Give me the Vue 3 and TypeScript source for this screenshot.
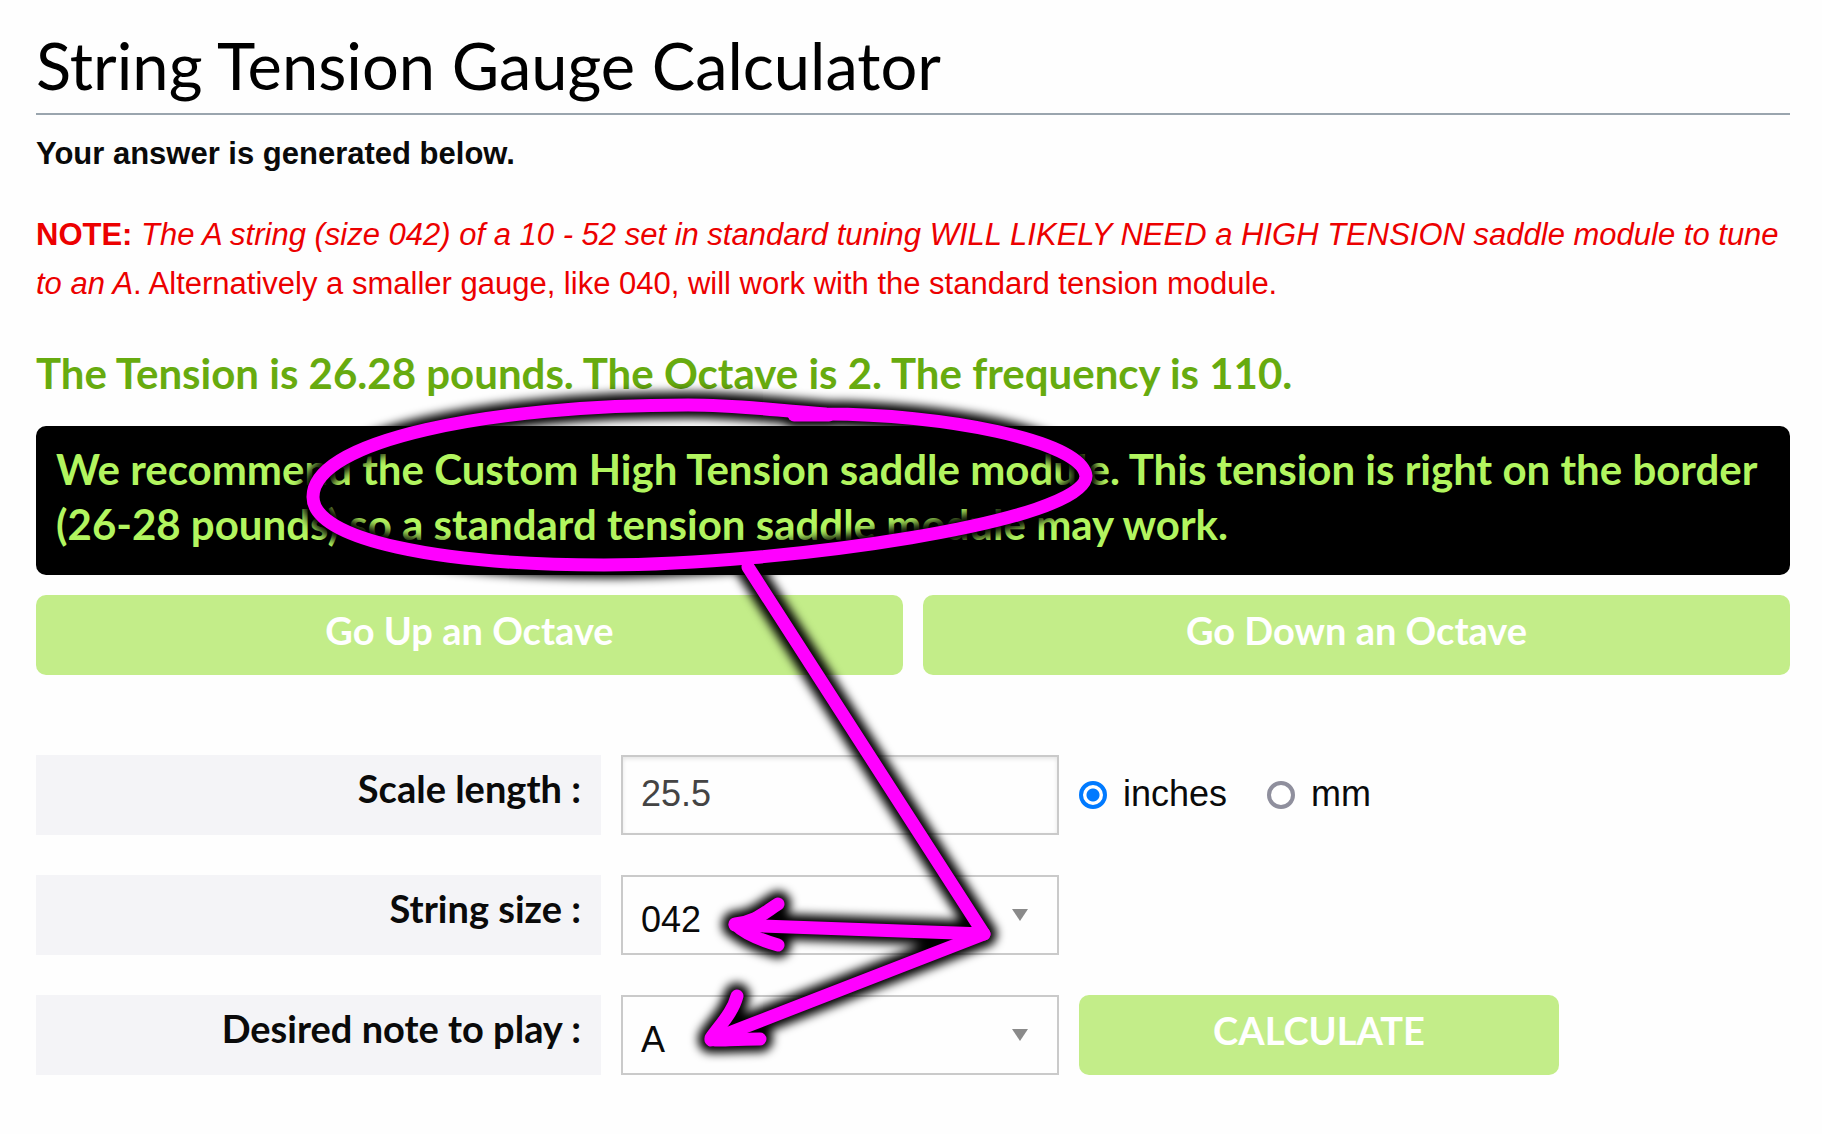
<script setup lang="ts">
import { ref } from 'vue'

type Unit = 'inches' | 'mm'

const scaleLength = ref('25.5')
const unit = ref<Unit>('inches')
const stringSize = ref('042')
const note = ref('A')

const units: Unit[] = ['inches', 'mm']
const sizes: string[] = ['038', '040', '042', '044', '046', '052']
const notes: string[] = ['A', 'B', 'C', 'D', 'E', 'F', 'G']
</script>

<template>
  <main class="page">
    <h1 class="title">String Tension Gauge Calculator</h1>
    <p class="lead">Your answer is generated below.</p>
    <p class="note">
      <strong>NOTE:</strong> <em>The A string (size 042) of a 10 - 52 set in standard tuning WILL LIKELY NEED a HIGH TENSION saddle module to tune to an A</em>. Alternatively a smaller gauge, like 040, will work with the standard tension module.
    </p>

    <h2 class="result">The Tension is 26.28 pounds. The Octave is 2. The frequency is 110.</h2>
    <p class="advice">We recommend the Custom High Tension saddle module. This tension is right on the border (26-28 pounds) so a standard tension saddle module may work.</p>

    <div class="octaves">
      <button type="button" class="btn">Go Up an Octave</button>
      <button type="button" class="btn">Go Down an Octave</button>
    </div>

    <form class="form" @submit.prevent>
      <div class="row">
        <label class="label" for="scale">Scale length :</label>
        <input id="scale" v-model="scaleLength" class="field text" type="text" />
        <div class="units">
          <label v-for="u in units" :key="u" class="unit">
            <input v-model="unit" class="radio" type="radio" name="unit" :value="u" />
            <span>{{ u }}</span>
          </label>
        </div>
      </div>
      <div class="row">
        <label class="label" for="size">String size :</label>
        <div class="picker">
          <select id="size" v-model="stringSize" class="field select">
            <option v-for="s in sizes" :key="s">{{ s }}</option>
          </select>
          <svg class="caret" viewBox="0 0 16 12" aria-hidden="true"><path d="M0 0H16L8 12Z" /></svg>
        </div>
      </div>
      <div class="row">
        <label class="label" for="note">Desired note to play :</label>
        <div class="picker">
          <select id="note" v-model="note" class="field select">
            <option v-for="n in notes" :key="n">{{ n }}</option>
          </select>
          <svg class="caret" viewBox="0 0 16 12" aria-hidden="true"><path d="M0 0H16L8 12Z" /></svg>
        </div>
        <button type="submit" class="btn calc">CALCULATE</button>
      </div>
    </form>

    <!-- Hand-drawn loop and arrows over the recommendation and the two pickers -->
    <svg class="markup" viewBox="0 0 1822 1134" aria-hidden="true">
      <defs>
        <g id="strokes">
          <path d="M826 414C940 414 1082 440 1086 476C1086 522 780 565 604 565C440 565 313 540 313 497C313 440 490 405 688 405C740 405 770 410 826 414" />
          <path d="M794 415H829" />
          <path d="M748 567L984 934L735 925" />
          <path d="M984 934L711 1040" />
          <path d="M778 904C765 912 756 922 735 924C745 934 760 940 778 945" />
          <path d="M737 996C733 1012 721 1024 711 1038C711 1042 725 1039 760 1039" />
        </g>
      </defs>
      <use href="#strokes" class="glow" />
      <use href="#strokes" class="ink" />
    </svg>
  </main>
</template>

<style>
body {
  margin: 0;
  background: #fefefe;
}
</style>

<style scoped>
.page {
  position: relative;
  box-sizing: border-box;
  padding: 33px 32px 59px 36px;
  font-family: "Liberation Sans", Arial, sans-serif;
  color: #0a0a0a;
}

.title,
.result,
.advice,
.label,
.btn {
  font-family: Lato, "Open Sans", sans-serif;
}

.title {
  margin: 0 0 14px;
  padding-bottom: 15px;
  border-bottom: 2px solid #9aa5ae;
  font-size: 65px;
  font-weight: 400;
  line-height: 65px;
  color: #000;
}

.lead,
.note {
  margin: 0;
  font-size: 31px;
  line-height: 49px;
}

.lead {
  margin-bottom: 32px;
  font-weight: 700;
}

.note {
  margin-bottom: 38px;
  color: #ec0000;
}

.result,
.advice {
  font-size: 42px;
  font-weight: 700;
  line-height: 55px;
}

.result {
  margin: 0 0 25px;
  color: #67ab0f;
}

.advice {
  margin: 0 0 20px;
  padding: 16px 20px 23px;
  border-radius: 10px;
  background: #000;
  color: #b2f55f;
}

.octaves {
  display: grid;
  grid-template-columns: 1fr 1fr;
  gap: 20px;
  margin-bottom: 80px;
}

.btn {
  box-sizing: border-box;
  height: 80px;
  padding: 0 20px 10px;
  border: 0;
  border-radius: 10px;
  background: #c3ed89;
  color: #fff;
  font-size: 38px;
  font-weight: 700;
}

.form {
  display: grid;
  gap: 40px;
}

.row {
  display: grid;
  grid-template-columns: 565fr 438fr 711fr;
  gap: 20px;
}

.label {
  display: flex;
  align-items: center;
  justify-content: flex-end;
  box-sizing: border-box;
  height: 80px;
  padding: 0 20px 14px;
  background: #f4f4f7;
  font-size: 38px;
  font-weight: 700;
}

.field {
  box-sizing: border-box;
  width: 100%;
  height: 80px;
  margin: 0;
  border: 2px solid #cacaca;
  border-radius: 0;
  background: #fefefe;
  font-family: inherit;
  font-size: 36px;
}

.text {
  padding: 0 18px 2px;
  color: #444;
  box-shadow: inset 0 2px 4px rgba(10, 10, 10, 0.1);
}

.picker {
  position: relative;
}

.select {
  appearance: none;
  padding: 8px 18px 0;
  color: #0a0a0a;
}

.caret {
  position: absolute;
  top: 34px;
  right: 31px;
  width: 16px;
  height: 12px;
  fill: #8a8a8a;
  pointer-events: none;
}

.units {
  display: flex;
  align-items: center;
  gap: 40px;
  padding-bottom: 2px;
  font-size: 36px;
}

.unit {
  display: flex;
  align-items: center;
  gap: 16px;
}

.radio {
  appearance: none;
  box-sizing: border-box;
  width: 28px;
  height: 28px;
  margin: 2px 0 0;
  border: 4px solid #8f8f9d;
  border-radius: 50%;
  background: #fff;
}

.radio:checked {
  border-color: #007aff;
  background: radial-gradient(circle, #007aff 6px, #fff 7px);
}

.calc {
  width: 480px;
}

.markup {
  position: absolute;
  top: 0;
  left: 0;
  width: 100%;
  pointer-events: none;
  fill: none;
  stroke-linecap: round;
  stroke-linejoin: round;
}

.ink {
  stroke: #f0f;
  stroke-width: 13px;
}

.glow {
  stroke: #000;
  stroke-width: 26px;
  filter: blur(5px);
}
</style>
